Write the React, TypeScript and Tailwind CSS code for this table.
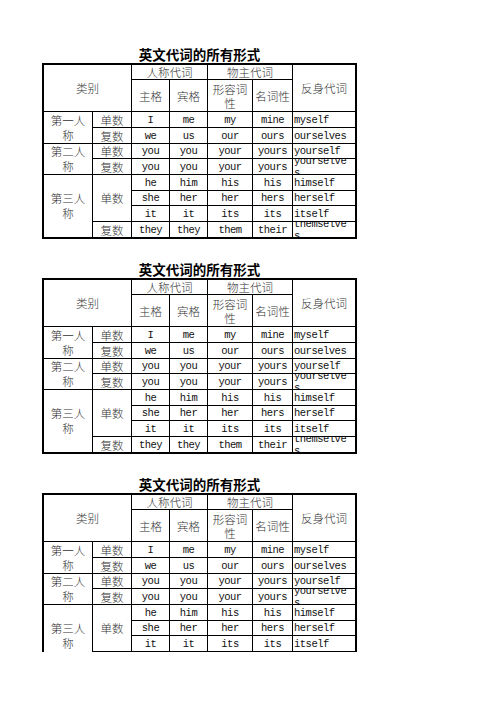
import React from 'react';

const zh = "font-['Noto_Sans_CJK_SC',sans-serif] font-light text-[11.5px] leading-[14px] text-[#333]";
const mono = "font-['Liberation_Mono',monospace] text-[10.5px] leading-[12px] tracking-[-0.5px] text-[#111]";

const values = [
  ['I', 'me', 'my', 'mine', 'myself'],
  ['we', 'us', 'our', 'ours', 'ourselves'],
  ['you', 'you', 'your', 'yours', 'yourself'],
  ['you', 'you', 'your', 'yours', 'yourselves'],
  ['he', 'him', 'his', 'his', 'himself'],
  ['she', 'her', 'her', 'hers', 'herself'],
  ['it', 'it', 'its', 'its', 'itself'],
  ['they', 'they', 'them', 'their', 'themselves'],
];

// cells that sit before the values of each row (person + number)
const lead: Record<number, { text: string; cls: string; wrap?: boolean }[]> = {
  0: [
    { text: '第一人称', cls: 'row-span-2 border-r border-b', wrap: true },
    { text: '单数', cls: 'border-r border-b' },
  ],
  1: [{ text: '复数', cls: 'border-r border-b' }],
  2: [
    { text: '第二人称', cls: 'row-span-2 border-r border-b', wrap: true },
    { text: '单数', cls: 'border-r border-b' },
  ],
  3: [{ text: '复数', cls: 'border-r border-b' }],
  4: [
    { text: '第三人称', cls: 'row-span-4 border-r', wrap: true },
    { text: '单数', cls: 'row-span-3 border-r border-b' },
  ],
  7: [{ text: '复数', cls: 'border-r' }],
};

function Cell({ cls, children }: { cls: string; children: React.ReactNode }) {
  return (
    <div className={`flex items-center justify-center overflow-hidden border-black ${cls}`}>
      {children}
    </div>
  );
}

function Table() {
  return (
    <div className="grid w-[315px] grid-cols-[49px_39px_38px_38px_45px_40px_62px] grid-rows-[15px_32px_16px_16px_15px_16px_16px_15px_16px_15px] border-2 border-black">
      <Cell cls={`col-span-2 row-span-2 border-r border-b ${zh}`}>类别</Cell>
      <Cell cls={`col-span-2 border-r border-b ${zh}`}>人称代词</Cell>
      <Cell cls={`col-span-2 border-r border-b ${zh}`}>物主代词</Cell>
      <Cell cls={`row-span-2 border-b ${zh}`}>反身代词</Cell>
      <Cell cls={`border-r border-b ${zh}`}>主格</Cell>
      <Cell cls={`border-r border-b ${zh}`}>宾格</Cell>
      <Cell cls={`border-r border-b ${zh}`}>
        <span className="text-center">形容词性</span>
      </Cell>
      <Cell cls={`border-r border-b ${zh}`}>名词性</Cell>

      {values.map((row, i) => {
        const last = i === values.length - 1;
        return (
          <React.Fragment key={i}>
            {(lead[i] || []).map((l) => (
              <Cell key={l.text + i} cls={`${l.cls} ${zh}`}>
                {l.wrap ? (
                  <span className="w-[36px] text-center leading-[15px]">{l.text}</span>
                ) : (
                  l.text
                )}
              </Cell>
            ))}
            {row.map((v, j) =>
              j < 4 ? (
                <Cell key={j} cls={`${last ? '' : 'border-b'} border-r ${mono}`}>
                  {v}
                </Cell>
              ) : (
                <Cell key={j} cls={`${last ? '' : 'border-b'} !justify-start pl-[1px] ${mono}`}>
                  <span className="w-[56px] break-all">{v}</span>
                </Cell>
              )
            )}
          </React.Fragment>
        );
      })}
    </div>
  );
}

function Title() {
  return (
    <div className="flex h-[17px] w-[315px] items-end justify-center font-['Noto_Sans_CJK_SC',sans-serif] text-[13.5px] font-bold leading-[17px] text-black">
      英文代词的所有形式
    </div>
  );
}

export default function App() {
  return (
    <div className="min-h-[702px] bg-white pl-[42px] pt-[46px]">
      <div className="flex flex-col gap-[22px]">
        <div>
          <Title />
          <Table />
        </div>
        <div>
          <Title />
          <Table />
        </div>
        <div>
          <Title />
          {/* page break: only the first rows show */}
          <div className="h-[159px] overflow-hidden">
            <Table />
          </div>
        </div>
      </div>
    </div>
  );
}
